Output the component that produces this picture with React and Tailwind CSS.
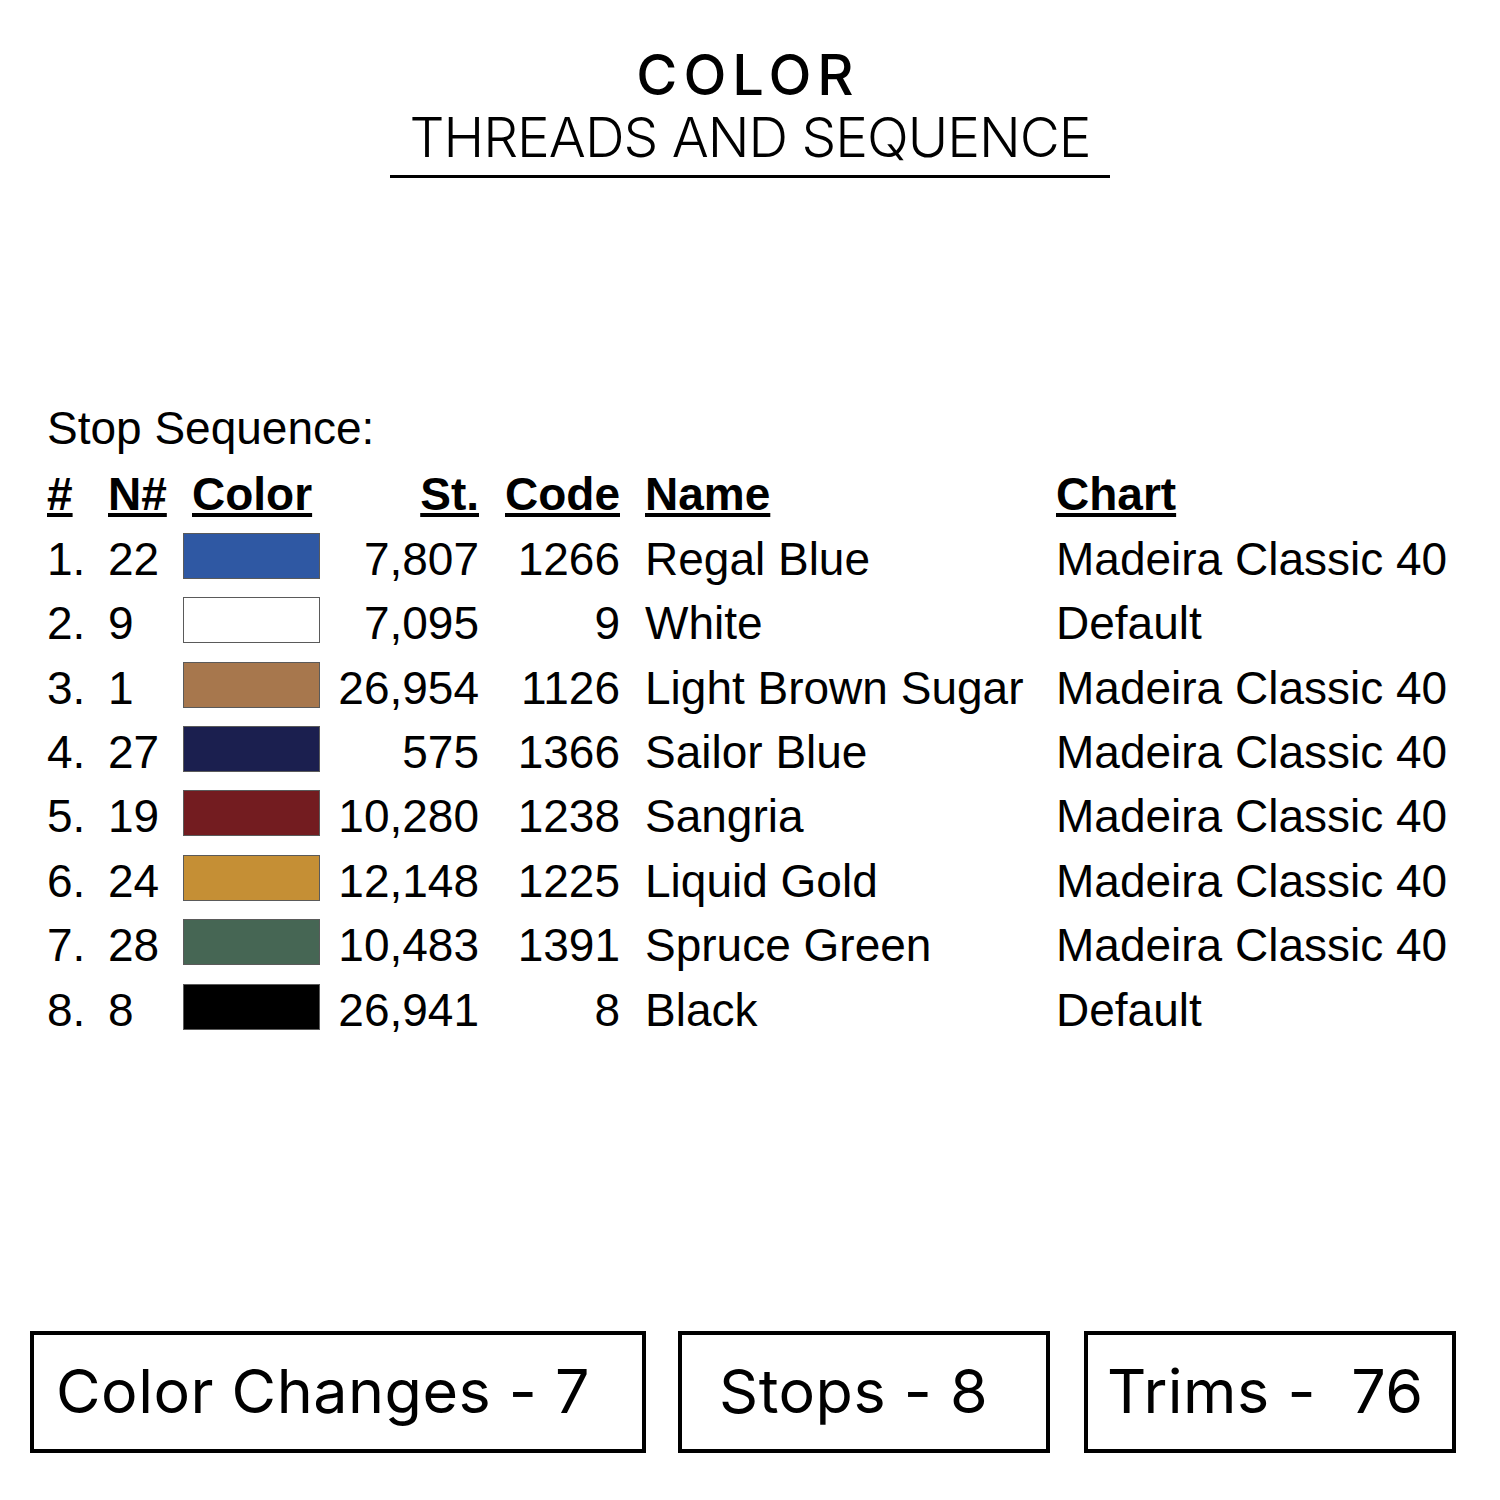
const rows = [
  { n: "1.", needle: "22", color: "bg-[#2f58a3]", st: "7,807", code: "1266", name: "Regal Blue", chart: "Madeira Classic 40" },
  { n: "2.", needle: "9", color: "bg-white", st: "7,095", code: "9", name: "White", chart: "Default" },
  { n: "3.", needle: "1", color: "bg-[#a7774d]", st: "26,954", code: "1126", name: "Light Brown Sugar", chart: "Madeira Classic 40" },
  { n: "4.", needle: "27", color: "bg-[#1b1f4f]", st: "575", code: "1366", name: "Sailor Blue", chart: "Madeira Classic 40" },
  { n: "5.", needle: "19", color: "bg-[#731c20]", st: "10,280", code: "1238", name: "Sangria", chart: "Madeira Classic 40" },
  { n: "6.", needle: "24", color: "bg-[#c58f35]", st: "12,148", code: "1225", name: "Liquid Gold", chart: "Madeira Classic 40" },
  { n: "7.", needle: "28", color: "bg-[#466654]", st: "10,483", code: "1391", name: "Spruce Green", chart: "Madeira Classic 40" },
  { n: "8.", needle: "8", color: "bg-black", st: "26,941", code: "8", name: "Black", chart: "Default" },
];

const head = "font-bold underline decoration-[4px] underline-offset-[3px]";

const StatBox = ({ label, className }) => (
  <div className={`flex h-[122px] items-center border-[4px] border-black ${className}`}>
    <span className="whitespace-pre text-[61px] leading-none tracking-[0.5px]">{label}</span>
  </div>
);

export default function App() {
  return (
    <div className="h-[1500px] w-[1500px] bg-white text-black">
      <div className="flex flex-col items-center pt-[47px] font-['Inter',sans-serif]">
        <div className="pr-[4px] text-[56px] font-medium leading-none tracking-[6px]">COLOR</div>
        <div className="mt-[7px] border-b-[3px] border-black px-[20px] pb-[10px] text-[55px] font-light leading-none tracking-[-1px]">
          THREADS AND SEQUENCE
        </div>
      </div>

      <div className="mt-[218px] pl-[47px] font-['Liberation_Sans',Arial,sans-serif] text-[46px]">
        <div className="mb-[2px] h-[64.4px] leading-[64.4px]">Stop Sequence:</div>
        <div className="flex h-[64.4px] leading-[64.4px]">
          <div className="w-[61px]"><span className={head}>#</span></div>
          <div className="w-[75px]"><span className={head}>N#</span></div>
          <div className="w-[137px] pl-[9px]"><span className={head}>Color</span></div>
          <div className="w-[159px] text-right"><span className={head}>St.</span></div>
          <div className="w-[141px] text-right"><span className={head}>Code</span></div>
          <div className="w-[436px] pl-[25px]"><span className={head}>Name</span></div>
          <div><span className={head}>Chart</span></div>
        </div>
        {rows.map((r) => (
          <div key={r.n} className="flex h-[64.4px] leading-[64.4px]">
            <div className="w-[61px]">{r.n}</div>
            <div className="w-[75px]">{r.needle}</div>
            <div className="w-[137px] pt-[6px]">
              <div className={`h-[46px] w-[137px] border border-[#5a5a5a] ${r.color}`} />
            </div>
            <div className="w-[159px] text-right">{r.st}</div>
            <div className="w-[141px] text-right">{r.code}</div>
            <div className="w-[436px] whitespace-nowrap pl-[25px]">{r.name}</div>
            <div className="whitespace-nowrap">{r.chart}</div>
          </div>
        ))}
      </div>

      <div className="mt-[289px] flex pl-[30px] font-['Inter',sans-serif]">
        <StatBox label="Color Changes - 7" className="w-[616px] pl-[22px]" />
        <StatBox label="Stops - 8" className="ml-[32px] w-[372px] pl-[37px]" />
        <StatBox label="Trims -  76" className="ml-[34px] w-[372px] pl-[19px]" />
      </div>
    </div>
  );
}
